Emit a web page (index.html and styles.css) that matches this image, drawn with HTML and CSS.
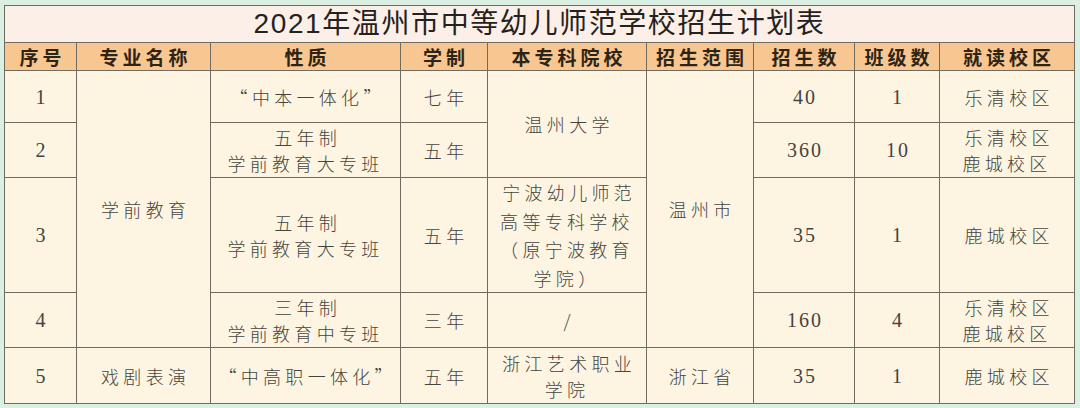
FILE: index.html
```html
<!DOCTYPE html>
<html lang="zh-CN">
<head>
<meta charset="utf-8">
<title>2021年温州市中等幼儿师范学校招生计划表</title>
<link rel="stylesheet" href="styles.css">
</head>
<body>
<table class="plan">
  <colgroup>
    <col class="c1"><col class="c2"><col class="c3"><col class="c4"><col class="c5"><col class="c6"><col class="c7"><col class="c8"><col class="c9">
  </colgroup>
  <tr class="r-title"><td colspan="9" class="title">2021年温州市中等幼儿师范学校招生计划表</td></tr>
  <tr class="r-head">
    <th>序号</th><th>专业名称</th><th>性质</th><th>学制</th><th>本专科院校</th><th>招生范围</th><th>招生数</th><th>班级数</th><th>就读校区</th>
  </tr>
  <tr class="r1">
    <td class="num">1</td>
    <td rowspan="4">学前教育</td>
    <td>“中本一体化”</td>
    <td>七年</td>
    <td rowspan="2">温州大学</td>
    <td rowspan="4">温州市</td>
    <td class="num">40</td>
    <td class="num">1</td>
    <td>乐清校区</td>
  </tr>
  <tr class="r2">
    <td class="num">2</td>
    <td>五年制<br>学前教育大专班</td>
    <td>五年</td>
    <td class="num">360</td>
    <td class="num">10</td>
    <td>乐清校区<br>鹿城校区</td>
  </tr>
  <tr class="r3">
    <td class="num">3</td>
    <td>五年制<br>学前教育大专班</td>
    <td>五年</td>
    <td class="tall">宁波幼儿师范<br>高等专科学校<br>（原宁波教育<br>学院）</td>
    <td class="num">35</td>
    <td class="num">1</td>
    <td>鹿城校区</td>
  </tr>
  <tr class="r4">
    <td class="num">4</td>
    <td>三年制<br>学前教育中专班</td>
    <td>三年</td>
    <td>/</td>
    <td class="num">160</td>
    <td class="num">4</td>
    <td>乐清校区<br>鹿城校区</td>
  </tr>
  <tr class="r5">
    <td class="num">5</td>
    <td>戏剧表演</td>
    <td>“中高职一体化”</td>
    <td>五年</td>
    <td>浙江艺术职业<br>学院</td>
    <td>浙江省</td>
    <td class="num">35</td>
    <td class="num">1</td>
    <td>鹿城校区</td>
  </tr>
</table>
</body>
</html>
```

FILE: styles.css
```css
html, body {
  margin: 0;
  padding: 0;
}
body {
  width: 1080px;
  height: 408px;
  overflow: hidden;
  background: #dcefe3;
  padding: 5px 0 0 4px;
  box-sizing: border-box;
  font-family: "Liberation Serif", "Noto Sans CJK SC", serif;
  color: #3a3a36;
}
.plan {
  border-collapse: collapse;
  table-layout: fixed;
  width: 1071px;
}
.c1 { width: 72px; }
.c2 { width: 134px; }
.c3 { width: 190px; }
.c4 { width: 87px; }
.c5 { width: 159px; }
.c6 { width: 107px; }
.c7 { width: 101px; }
.c8 { width: 85px; }
.c9 { width: 135px; }

.plan td, .plan th {
  border: 1px solid #6f6b5e;
  padding: 0;
  text-align: center;
  vertical-align: middle;
  background: #fdf5e2;
  font-family: "Noto Sans CJK SC", sans-serif;
  font-weight: 300;
  font-size: 18px;
  letter-spacing: 4.3px;
  text-indent: 4.3px;
  line-height: 26px;
  color: #45443f;
}
.plan .title {
  background: #fcefe7;
  font-family: "Liberation Sans", "Noto Sans CJK SC", sans-serif;
  font-weight: 400;
  font-size: 28px;
  letter-spacing: 1.6px;
  text-indent: 0;
  color: #232220;
  height: 36px;
  line-height: 36px;
}
.plan th {
  background: #f8c690;
  font-weight: 700;
  font-size: 19px;
  letter-spacing: 4px;
  text-indent: 4px;
  color: #2e2415;
  height: 27px;
  line-height: 27px;
}
.plan .num {
  font-family: "Liberation Serif", serif;
  font-weight: 400;
  font-size: 20px;
  letter-spacing: 2px;
  text-indent: 2px;
}
.plan .tall {
  line-height: 28.5px;
}
.r1 { height: 52px; }
.r2 { height: 55px; }
.r3 { height: 114px; }
.r4 { height: 55px; }
.r5 { height: 56px; }
```
